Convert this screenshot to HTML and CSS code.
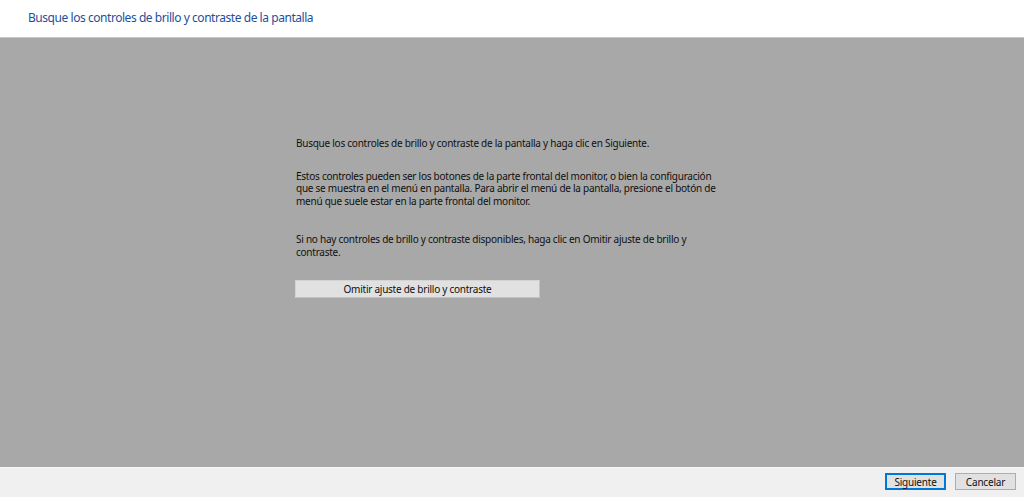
FILE: index.html
```html
<!DOCTYPE html>
<html lang="es">
<head>
<meta charset="utf-8">
<link rel="stylesheet" href="styles.css">
</head>
<body>
<div class="window">
  <header class="header">
    <h1 class="title">Busque los controles de brillo y contraste de la pantalla</h1>
  </header>
  <main class="main">
    <div class="content">
      <p class="p1">Busque los controles de brillo y contraste de la pantalla y haga clic en Siguiente.</p>
      <p class="p2">Estos controles pueden ser los botones de la parte frontal del monitor, o bien la configuración que se muestra en el menú en pantalla. Para abrir el menú de la pantalla, presione el botón de menú que suele estar en la parte frontal del monitor.</p>
      <p class="p3">Si no hay controles de brillo y contraste disponibles, haga clic en Omitir ajuste de brillo y contraste.</p>
      <button class="skip">Omitir ajuste de brillo y contraste</button>
    </div>
  </main>
  <footer class="footer">
    <button class="btn btn-primary">Siguiente</button>
    <button class="btn">Cancelar</button>
  </footer>
</div>
</body>
</html>
```
FILE: styles.css
```css
html, body {
  margin: 0;
  padding: 0;
}
body {
  font-family: "Segoe UI", "Noto Sans", "Open Sans", sans-serif;
  width: 1024px;
  height: 497px;
  overflow: hidden;
}
.window {
  display: flex;
  flex-direction: column;
  height: 497px;
}
.header {
  height: 37px;
  background: #ffffff;
  border-bottom: 1px solid #c8c8c8;
  display: flex;
  align-items: center;
  padding-left: 28px;
}
.title {
  margin: 0;
  font-weight: normal;
  font-size: 12px;
  color: #1e4f9c;
  letter-spacing: -0.45px;
  padding-bottom: 2px;
}
.main {
  flex: 1;
  background: #a8a8a8;
}
.content {
  width: 428px;
  margin-left: 296px;
  padding-top: 99px;
  font-size: 10px;
  line-height: 12.5px;
  color: #101010;
  letter-spacing: -0.25px;
}
.content p {
  margin: 0;
}
.p2 {
  margin-top: 20px !important;
}
.p3 {
  margin-top: 26px !important;
}
.skip {
  display: block;
  margin-top: 22px;
  margin-left: -1px;
  width: 245px;
  height: 18px;
  padding: 0;
  font-family: inherit;
  font-size: 10px;
  letter-spacing: -0.25px;
  color: #101010;
  background: #e1e1e1;
  border: 1px solid #d4d4d4;
  border-right-color: #c2c2c2;
  border-bottom-color: #c2c2c2;
}
.footer {
  height: 30px;
  box-sizing: border-box;
  background: #f0f0f0;
  border-top: 1px solid #f8f8f8;
  display: flex;
  justify-content: flex-end;
  align-items: center;
  gap: 9px;
  padding-right: 8px;
  padding-bottom: 2px;
}
.btn {
  width: 61px;
  height: 17px;
  padding: 0;
  font-family: inherit;
  font-size: 10px;
  letter-spacing: -0.2px;
  color: #101010;
  background: #e1e1e1;
  border: 1px solid #adadad;
}
.btn-primary {
  border: 2px solid #0078d7;
}
```
